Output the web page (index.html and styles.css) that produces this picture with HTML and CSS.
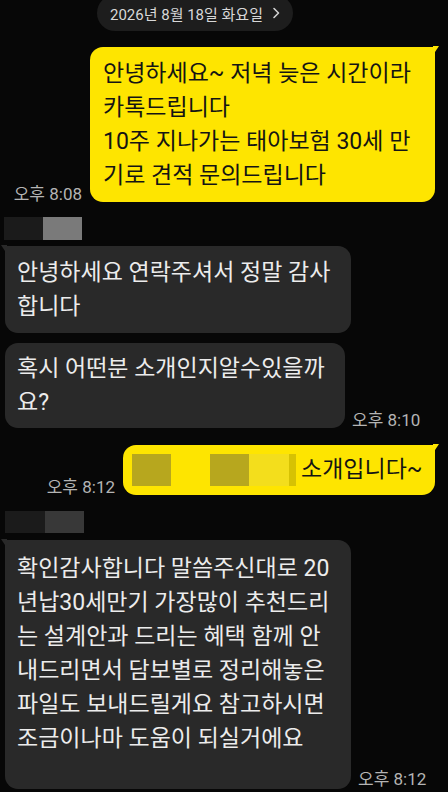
FILE: index.html
```html
<!DOCTYPE html>
<html lang="ko">
<head>
    <meta charset="UTF-8">
    <meta name="viewport" content="width=device-width, initial-scale=1.0">
    <title>채팅</title>
    <link rel="stylesheet" href="styles.css">
</head>
<body>
    <main class="chat">
        <div class="date-pill">
            <span>2026년 8월 18일 화요일</span>
            <svg class="chevron" width="8" height="12" viewBox="0 0 8 12">
                <path d="M2 1.5 L6.5 6 L2 10.5" fill="none" stroke="#d0d0d0" stroke-width="1.6" stroke-linecap="round" stroke-linejoin="round"/>
            </svg>
        </div>

        <div class="msg msg-out first">
            <span class="time">오후 8:08</span>
            <div class="bubble bubble-out tail w-first">안녕하세요~ 저녁 늦은 시간이라<br>카톡드립니다<br>10주 지나가는 태아보험 30세 만<br>기로 견적 문의드립니다</div>
        </div>

        <!-- 이름 가림 -->
        <div class="sender">
            <span class="mask mask-dark"></span>
            <span class="mask mask-light"></span>
        </div>

        <div class="msg msg-in">
            <div class="bubble bubble-in tail w-thanks">안녕하세요 연락주셔서 정말 감사<br>합니다</div>
        </div>
        <div class="msg msg-in next">
            <div class="bubble bubble-in tight w-ask">혹시 어떤분 소개인지알수있을까<br>요?</div>
            <span class="time">오후 8:10</span>
        </div>

        <div class="msg msg-out reply">
            <span class="time">오후 8:12</span>
            <div class="bubble bubble-out tail short w-intro">
                <span class="mask mask-olive"></span><span class="mask-gap"></span><span class="mask mask-olive"></span><span class="mask mask-pale"></span><span class="mask mask-strip"></span>소개입니다~
            </div>
        </div>

        <div class="sender second">
            <span class="mask mask-dark"></span>
            <span class="mask mask-mid"></span>
        </div>

        <div class="msg msg-in last">
            <div class="bubble bubble-in tail long w-answer">확인감사합니다 말씀주신대로 20<br>년납30세만기 가장많이 추천드리<br>는 설계안과 드리는 혜택 함께 안<br>내드리면서 담보별로 정리해놓은<br>파일도 보내드릴게요 참고하시면<br>조금이나마 도움이 되실거에요</div>
            <span class="time">오후 8:12</span>
        </div>
    </main>
</body>
</html>
```

FILE: styles.css
```css
body {
    margin: 0;
    background-color: #070707;
    font-family: Roboto, "Noto Sans CJK KR", sans-serif;
    overflow: hidden;
}
.chat {
    display: flex;
    flex-direction: column;
    padding: 0 13px 0 5px;
}
.date-pill {
    align-self: flex-start;
    display: flex;
    align-items: center;
    gap: 9px;
    height: 36px;
    margin: -5px 0 0 92px;
    padding: 0 13px;
    border-radius: 18px;
    background-color: #1d1d1d;
    color: #d8d8d8;
    font-size: 15px;
}
.msg {
    display: flex;
    align-items: flex-end;
    gap: 8px;
}
.msg-out {
    justify-content: flex-end;
}
.msg-in {
    justify-content: flex-start;
    gap: 7px;
}
.msg.first {
    margin-top: 16px;
}
.msg.next {
    margin-top: 10px;
}
.msg.reply {
    margin-top: 17px;
}
.time {
    color: #b4b4b4;
    font-size: 17px;
    line-height: 20px;
    white-space: nowrap;
    margin-bottom: -2px;
}
.msg.last .time {
    margin-bottom: 0;
}
.bubble {
    position: relative;
    box-sizing: border-box;
    padding: 10px 13px 9px 12px;
    border-radius: 13px;
    font-size: 23px;
    line-height: 34px;
    white-space: nowrap;
}
.bubble-out {
    background-color: #fee500;
    color: #141414;
    padding-left: 13px;
}
.bubble-in {
    background-color: #292929;
    color: #ececec;
}
.bubble-out.tail {
    border-top-right-radius: 2px;
}
.bubble-in.tail {
    border-top-left-radius: 2px;
}
.bubble-out.tail::after,
.bubble-in.tail::after {
    content: "";
    position: absolute;
    top: -1px;
    width: 6px;
    height: 9px;
}
.bubble-out.tail::after {
    right: -4px;
    background-color: #fee500;
    clip-path: polygon(0 0, 100% 0, 0 100%);
}
.bubble-in.tail::after {
    left: -4px;
    background-color: #292929;
    clip-path: polygon(0 0, 100% 0, 100% 100%);
}
.bubble.tight {
    padding-top: 9px;
    padding-bottom: 8px;
}
.bubble.short {
    display: flex;
    align-items: center;
    padding: 8px 13px 8px 9px;
}
.bubble.long {
    padding-top: 12px;
    padding-bottom: 33px;
}
.w-first { width: 345px; }
.w-thanks { width: 346px; }
.w-ask { width: 340px; }
.w-intro { width: 312px; }
.w-answer { width: 346px; }
.sender {
    display: flex;
    margin: 15px 0 6px -1px;
}
.sender.second {
    margin: 16px 0 7px 0;
}
.mask {
    display: inline-block;
    width: 39px;
    height: 23px;
}
.mask-dark {
    background-color: #1b1b1b;
}
.mask-light {
    background-color: #7a7a7a;
}
.mask-mid {
    background-color: #383838;
    height: 22px;
}
.sender.second .mask-dark {
    width: 40px;
    height: 22px;
}
.mask-olive,
.mask-pale,
.mask-strip,
.mask-gap {
    height: 32px;
    flex-shrink: 0;
}
.mask-olive {
    background-color: #b7a71e;
}
.mask-gap {
    width: 39px;
}
.mask-pale {
    width: 40px;
    background-color: #f3de1c;
}
.mask-strip {
    width: 7px;
    margin-right: 5px;
    background-color: #d6c203;
}
```
